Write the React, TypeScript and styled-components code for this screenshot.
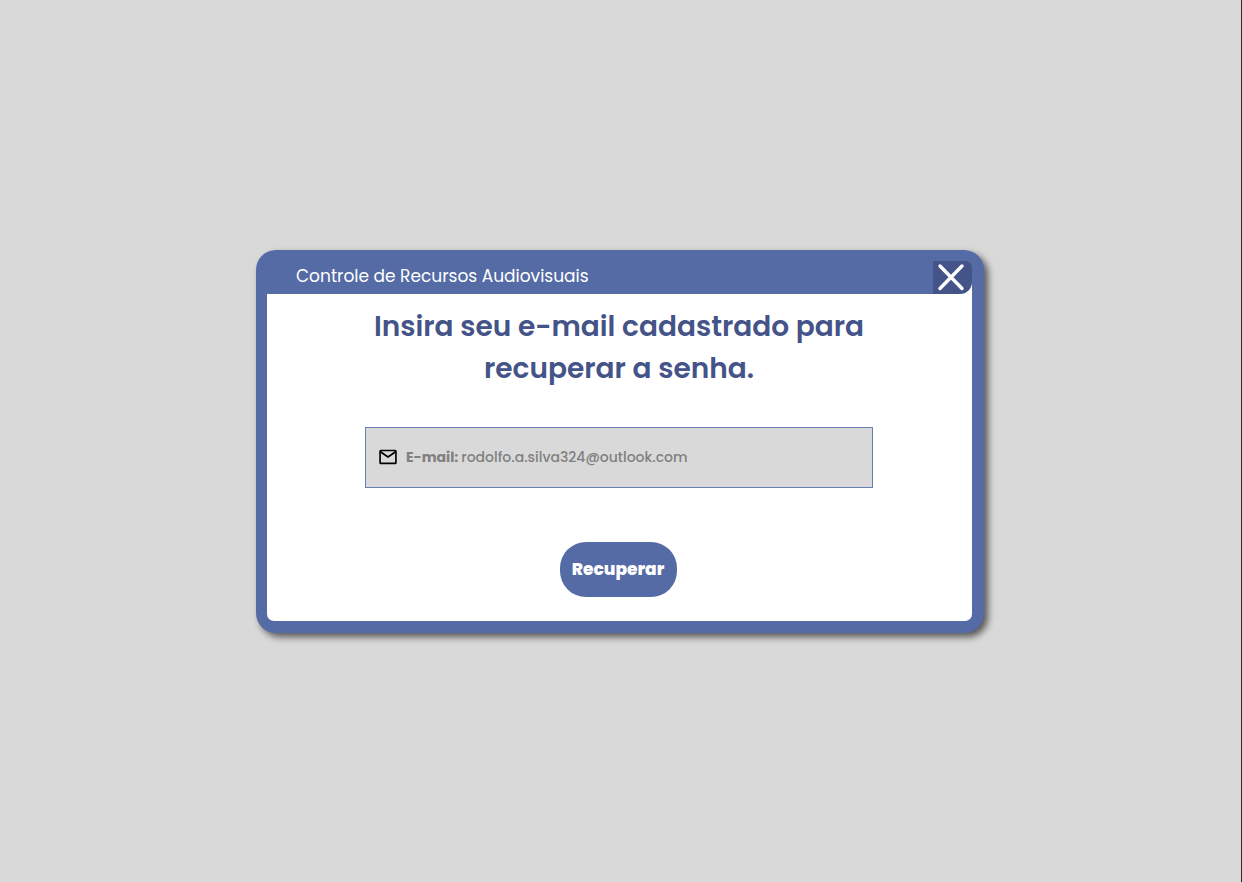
import React, { useState } from "react";
import styled, { createGlobalStyle } from "styled-components";

const GlobalStyle = createGlobalStyle`
  *, *::before, *::after { box-sizing: border-box; }
  body {
    margin: 0;
    background: #d9d9d9;
    font-family: Poppins, Inter, sans-serif;
  }
`;

const Page = styled.main`
  min-height: 100vh;
  padding: 24px 25px 24px 24px;
  display: flex;
  align-items: center;
  justify-content: center;
  border-right: 1px solid #2c2c2c;
`;

const Dialog = styled.section`
  width: 100%;
  max-width: 728px;
  padding: 11px 12px 12px 11px;
  border-radius: 20px;
  background: #556ba5;
  box-shadow: 4px 4px 7px rgba(0, 0, 0, 0.6);
`;

const Panel = styled.div`
  border-radius: 0 0 7px 7px;
  overflow: hidden;
  background: #fff;
`;

const TitleBar = styled.header`
  display: flex;
  height: 33px;
`;

const Title = styled.h1`
  flex: 1;
  margin: 0;
  padding-left: 29px;
  background: #556ba5;
  color: #fff;
  font-size: 17px;
  font-weight: 400;
  line-height: 30px;
`;

const CloseButton = styled.button`
  display: flex;
  align-items: center;
  justify-content: center;
  width: 39px;
  padding: 0 3px 0 0;
  border: 0;
  border-radius: 0 7px 12px 0;
  background: #445388;
  /* keeps the title bar colour above the rounded lower corner */
  box-shadow: 0 -12px 0 #556ba5;
  cursor: pointer;
`;

const Form = styled.form`
  display: flex;
  flex-direction: column;
  align-items: center;
  padding: 12px 25px 24px 24px;
`;

const Heading = styled.h2`
  max-width: 508px;
  margin: 0 0 37px;
  color: #445388;
  font-size: 28px;
  font-weight: 600;
  line-height: 42px;
  text-align: center;
`;

const Field = styled.div`
  display: flex;
  align-items: center;
  width: 100%;
  max-width: 508px;
  height: 61px;
  margin-bottom: 54px;
  padding: 0 12px;
  border: 1px solid #6880b4;
  background: #d9d9d9;
  color: #808080;
  font-size: 14px;
`;

const Label = styled.label`
  margin: 0 3px 0 8px;
  font-weight: 700;
`;

const EmailInput = styled.input`
  flex: 1;
  min-width: 0;
  padding: 0;
  border: 0;
  outline: 0;
  background: transparent;
  color: inherit;
  font: inherit;
  font-weight: 500;
`;

const SubmitButton = styled.button`
  width: 117px;
  height: 55px;
  margin-right: 2px;
  padding: 0;
  border: 0;
  border-radius: 26px;
  background: #556ba5;
  color: #fff;
  font: inherit;
  font-size: 17px;
  font-weight: 800;
  cursor: pointer;
`;

const MailIcon = () => (
  <svg width="20" height="20" viewBox="0 0 24 24" fill="none" stroke="#000" strokeWidth="2" strokeLinejoin="round" aria-hidden="true">
    <rect x="2.5" y="4.2" width="19" height="15.4" rx="0.8" />
    <path d="M2.5 5.4 12 12l9.500-6.600" />
  </svg>
);

const CloseIcon = () => (
  <svg width="28" height="28" viewBox="0 0 28 28" fill="none" stroke="#fff" strokeWidth="3.4" strokeLinecap="round" aria-hidden="true">
    <path d="M3 3 25 25.500M25 3 3 25.500" />
  </svg>
);

export default function App() {
  const [email, setEmail] = useState("rodolfo.a.silva324@outlook.com");

  return (
    <>
      <GlobalStyle />
      <Page>
        <Dialog role="dialog" aria-labelledby="dialog-title">
          <Panel>
            <TitleBar>
              <Title id="dialog-title">Controle de Recursos Audiovisuais</Title>
              <CloseButton type="button" aria-label="Fechar">
                <CloseIcon />
              </CloseButton>
            </TitleBar>
            <Form onSubmit={(event) => event.preventDefault()}>
              <Heading>Insira seu e-mail cadastrado para recuperar a senha.</Heading>
              <Field>
                <MailIcon />
                <Label htmlFor="email">E-mail:</Label>
                <EmailInput
                  id="email"
                  type="email"
                  value={email}
                  onChange={(event) => setEmail(event.target.value)}
                />
              </Field>
              <SubmitButton type="submit">Recuperar</SubmitButton>
            </Form>
          </Panel>
        </Dialog>
      </Page>
    </>
  );
}
